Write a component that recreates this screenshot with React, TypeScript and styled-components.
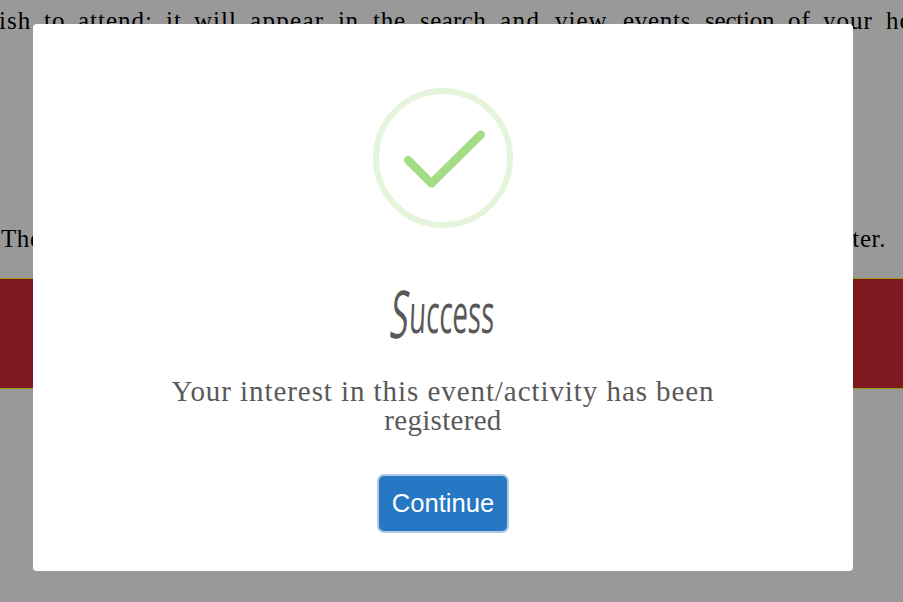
import React from "react";
import styled, { createGlobalStyle } from "styled-components";

const GlobalStyle = createGlobalStyle`
  * { box-sizing: border-box; }
  html, body { margin: 0; height: 100%; overflow: hidden; background: #fff; }
`;

const Page = styled.main`
  width: 903px;
  height: 602px;
  overflow: hidden;
  color: #000;
  font: 25px/30px "Liberation Serif", serif;
`;

const Line = styled.p`
  display: grid;
  grid-template-columns: 44px 34px 88px 28px 56px 88px 35px 47px 80px 55px 68px 82px 83px 35px 63px 80px;
  height: 30px;
  margin: 6px 0 0;
  white-space: nowrap;
`;

const Word = styled.span<{ $track?: number; $shift?: number }>`
  letter-spacing: ${(p) => p.$track ?? 1}px;
  margin-left: ${(p) => p.$shift ?? 0}px;
`;

const Closing = styled.p`
  display: flex;
  justify-content: space-between;
  height: 30px;
  margin: 188px 17px 0 1px;
  letter-spacing: 0.6px;
`;

const Band = styled.div`
  height: 111px;
  margin-top: 24px;
  background: #d42b35;
  border: solid #ffff2b;
  border-width: 1px 0;
`;

const Overlay = styled.div`
  position: fixed;
  inset: 0;
  display: flex;
  align-items: flex-start;
  padding: 24px 50px 0 33px;
  background: rgba(0, 0, 0, 0.4);
`;

const Dialog = styled.section`
  display: flex;
  flex-direction: column;
  align-items: center;
  width: 820px;
  height: 547px;
  padding-top: 64px;
  background: #fff;
  border-radius: 4px;
  color: #595959;
`;

const Badge = styled.svg`
  display: block;
  width: 140px;
  height: 140px;
`;

const Title = styled.h2`
  display: flex;
  align-items: baseline;
  justify-content: center;
  width: 240px;
  height: 70px;
  margin: 44px 0 0;
  font: 500 54px/70px "Open Sans", sans-serif;
  transform: scaleX(0.51) skewX(-5deg);
`;

const Initial = styled.span`
  font-size: 66px;
  font-weight: 500;
  line-height: 70px;
  transform: translateY(5px) skewX(-8deg);
`;

const Message = styled.p`
  margin: 35px 0 0;
  width: 600px;
  text-align: center;
  font: 29px/29px "Liberation Serif", serif;
`;

const MessageLine = styled.span<{ $track: number }>`
  display: block;
  letter-spacing: ${(p) => p.$track}px;
`;

const Continue = styled.button`
  width: 128px;
  height: 55px;
  margin-top: 41px;
  padding: 0;
  border: 0;
  border-radius: 5px;
  background: #2778c4;
  box-shadow: 0 0 0 2px #b0cae5;
  color: #fff;
  font: 25.6px "Liberation Sans", Arial, sans-serif;
`;

const words: { text: string; track?: number; shift?: number }[] = [
  { text: "wish", shift: -20 },
  { text: "to" },
  { text: "attend;" },
  { text: "it" },
  { text: "will" },
  { text: "appear", track: 1.3 },
  { text: "in", track: 0.6 },
  { text: "the", track: 0.8 },
  { text: "search", track: 0.4 },
  { text: "and", track: 1.5 },
  { text: "view" },
  { text: "events", track: 0.7 },
  { text: "section", track: -0.2 },
  { text: "of" },
  { text: "your" },
  { text: "home" },
];

export default function App() {
  return (
    <>
      <GlobalStyle />
      <Page>
        <Line>
          {words.map((w) => (
            <Word key={w.text} $track={w.track} $shift={w.shift}>{w.text}</Word>
          ))}
        </Line>
        <Closing>
          <span>The</span>
          <span>ter.</span>
        </Closing>
        <Band />
      </Page>
      <Overlay>
        <Dialog role="dialog" aria-modal="true">
          <Badge viewBox="0 0 140 140" fill="none" aria-hidden="true">
            <circle cx="70" cy="70" r="67" stroke="#e4f5db" strokeWidth="6" />
            <path d="M35.2 72.2L58.4 95.4L107.6 46.7" stroke="#a5dc86" strokeWidth="8.4" strokeLinecap="round" strokeLinejoin="round" />
          </Badge>
          <Title><Initial>S</Initial>uccess</Title>
          <Message>
            <MessageLine $track={0.93}>Your interest in this event/activity has been</MessageLine>
            <MessageLine $track={0.3}>registered</MessageLine>
          </Message>
          <Continue>Continue</Continue>
        </Dialog>
      </Overlay>
    </>
  );
}
